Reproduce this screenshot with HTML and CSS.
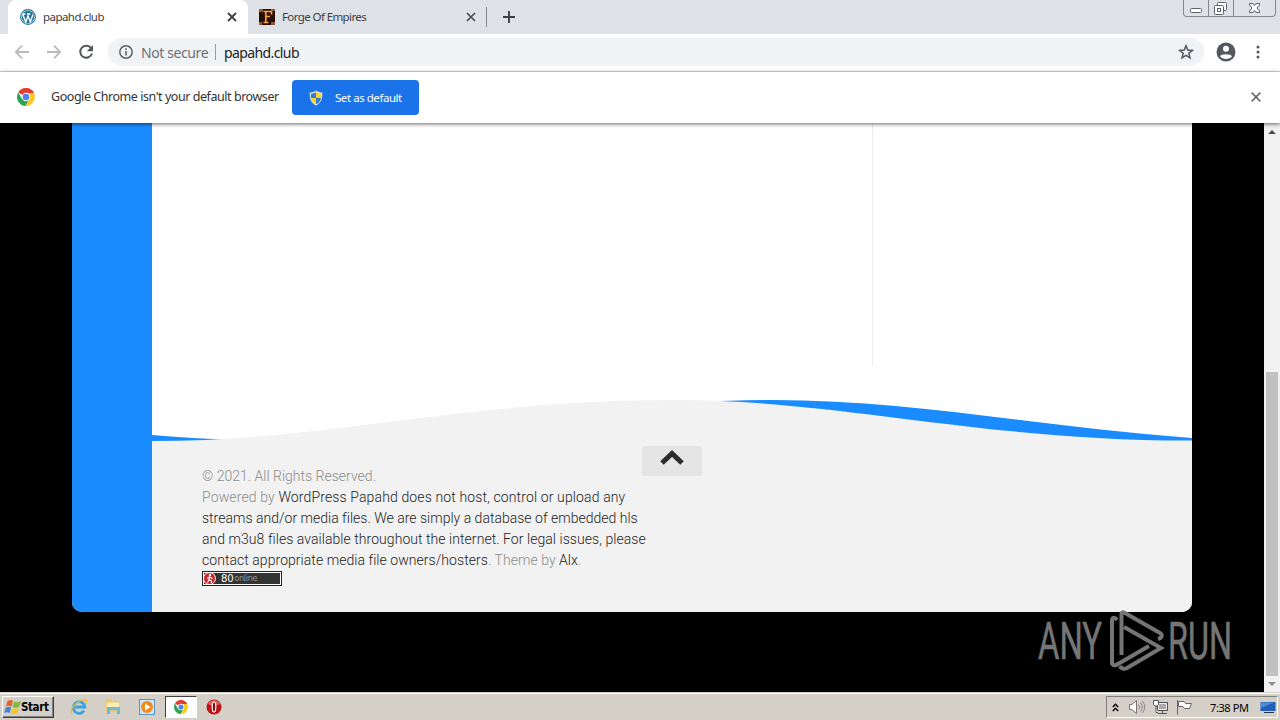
FILE: index.html
```html
<!DOCTYPE html>
<html lang="en">
<head>
<meta charset="UTF-8">
<title>papahd.club</title>
<link rel="stylesheet" href="styles.css">
</head>
<body>
<svg width="0" height="0" class="defs">
    <symbol id="chrome" viewBox="0 0 18 18">
        <path d="M9 9L1.2 4.5A9 9 0 0 1 16.8 4.5L16.8 5H9z" fill="#e33b2e"/>
        <path d="M9 9L5.2 11.2L1.2 4.5A9 9 0 0 0 8.6 18L12.5 11z" fill="#2da44e"/>
        <path d="M9 5H16.9A9 9 0 0 1 8.6 18L12.5 11z" fill="#fbc81e"/>
        <circle cx="9" cy="9" r="4.2" fill="#fff"/>
        <circle cx="9" cy="9" r="3.3" fill="#4a83ee"/>
    </symbol>
</svg>

<div class="tabs">
    <div class="tab active">
        <svg class="fav" viewBox="0 0 16 16">
            <circle cx="8" cy="8" r="7.4" fill="#fff" stroke="#21759b" stroke-width="1.1"/>
            <circle cx="8" cy="8" r="6.3" fill="#21759b"/>
            <path d="M2.6 5.2L5.8 13L8 6.8L10.3 13L13 5.5M2.2 5H5.4M7 5H10.4" fill="none" stroke="#fff" stroke-width="1.4"/>
        </svg>
        <span class="name name1">papahd.club</span>
        <svg class="x" viewBox="0 0 10 10"><path d="M1 1L9 9M9 1L1 9" stroke="#3c4043" stroke-width="1.8"/></svg>
    </div>
    <div class="tab second">
        <svg class="fav" viewBox="0 0 16 16">
            <rect width="16" height="16" fill="#2a0d05"/>
            <path d="M0 0H4V3H0zM12 13H16V16H12zM12 0H16V2H12zM0 13H3V16H0z" fill="#8a5a48"/>
            <path d="M4.500 2.500H12.500V5.500M6.800 2.500V13.500M4.500 13.500H9.500M7 7.500H11" fill="none" stroke="#f5a33b" stroke-width="1.700"/>
        </svg>
        <span class="name name2">Forge Of Empires</span>
        <svg class="x" viewBox="0 0 10 10"><path d="M1 1L9 9M9 1L1 9" stroke="#4a4d51" stroke-width="1.7"/></svg>
    </div>
    <div class="sep"></div>
    <svg class="plus" viewBox="0 0 12 12"><path d="M6 0V12M0 6H12" stroke="#3c4043" stroke-width="1.9"/></svg>
    <div class="winbtns">
        <span class="wb"><svg width="26" height="16" viewBox="0 0 26 16"><rect x="6.500" y="8.500" width="11" height="4" rx="1" fill="#fff" stroke="#5f6368"/></svg></span>
        <span class="wb"><svg width="24" height="16" viewBox="0 0 24 16"><rect x="8.500" y="2.500" width="9" height="8" rx="1" fill="#fff" stroke="#5f6368"/><rect x="5.500" y="5.500" width="9" height="9" rx="1" fill="#fff" stroke="#5f6368"/><rect x="8.500" y="8.500" width="3" height="3" fill="none" stroke="#5f6368"/></svg></span>
        <span class="wb last"><svg width="41" height="16" viewBox="0 0 41 16"><path d="M15.500 3.500H19L20.500 5.500L22 3.500H25.500V5L23 8L25.500 11V12.500H22L20.500 10.500L19 12.500H15.500V11L18 8L15.500 5z" fill="#fff" stroke="#5f6368"/></svg></span>
    </div>
</div>

<div class="toolbar">
    <svg class="nav" viewBox="0 0 16 16"><path d="M15 8H2M8 1.700L1.800 8L8 14.300" fill="none" stroke="#b9bbbe" stroke-width="1.8"/></svg>
    <svg class="nav" viewBox="0 0 16 16"><path d="M1 8H14M8 1.700L14.200 8L8 14.300" fill="none" stroke="#b9bbbe" stroke-width="1.8"/></svg>
    <svg class="nav" viewBox="0 0 16 16"><path d="M13.200 4.300A6 6 0 1 0 14 9.500" fill="none" stroke="#54585d" stroke-width="2"/><path d="M15 1V7.200H8.800z" fill="#54585d"/></svg>
    <div class="omnibox">
        <svg width="14" height="14" viewBox="0 0 14 14"><circle cx="7" cy="7" r="6.200" fill="none" stroke="#5f6368" stroke-width="1.500"/><path d="M7 6V10.500M7 3.300V4.900" stroke="#5f6368" stroke-width="1.600"/></svg>
        <span class="notsecure">Not secure</span>
        <span class="bar"></span>
        <span class="url">papahd.club</span>
        <svg class="star" viewBox="0 0 16 16"><path d="M8 1.800L9.700 6.100L14.300 6.400L10.800 9.300L12 13.900L8 11.400L4 13.900L5.200 9.300L1.700 6.400L6.300 6.100z" fill="none" stroke="#54585d" stroke-width="1.500"/></svg>
    </div>
    <svg class="user" viewBox="0 0 20 20"><circle cx="10" cy="10" r="9.500" fill="#54585d"/><circle cx="10" cy="6.800" r="3" fill="#fff"/><path d="M4 14.300C5 11.600 15 11.600 16 14.300C13.500 17.800 6.500 17.800 4 14.300z" fill="#fff"/></svg>
    <svg class="dots" viewBox="0 0 4 14"><circle cx="2" cy="2" r="1.500"/><circle cx="2" cy="7" r="1.500"/><circle cx="2" cy="12" r="1.500"/></svg>
</div>

<div class="infobar">
    <svg class="logo"><use href="#chrome"/></svg>
    <span class="msg">Google Chrome isn't your default browser</span>
    <div class="setdefault">
        <svg width="14" height="16" viewBox="0 0 14 16"><path d="M7 .5C5 2 3 2.500 .7 2.500C.5 9 2 13 7 15.500C12 13 13.500 9 13.300 2.500C11 2.500 9 2 7 .5z" fill="#e9e7dc"/><path d="M7 2V8H2C1.800 6.500 1.800 5 2 3.700C4 3.600 5.500 3 7 2zM7 8H12C11.500 11 10 13 7 14.300z" fill="#2e7fd4"/><path d="M7 2C8.500 3 10 3.600 12 3.700C12.200 5 12.200 6.500 12 8H7zM7 8V14.300C4 13 2.500 11 2 8z" fill="#fad02c"/></svg>
        <span>Set as default</span>
    </div>
    <svg class="close" viewBox="0 0 10 10"><path d="M.7 .7L9.300 9.300M9.300 .7L.7 9.300" stroke="#6a6d71" stroke-width="1.700"/></svg>
</div>

<div class="view">
    <div class="page">
        <div class="sidebar"></div>
        <div class="main">
            <div class="content"><div class="col"></div></div>
            <svg class="wave" viewBox="0 0 1040 41">
                <path d="M0 35C30 37.500 60 39.500 90 39.800C300 40 430 0 620 0C760 0 880 26 1040 38V41H0z" fill="#1a8cff"/>
                <path d="M0 41C180 41 310 0 522 0C690 0 830 41 1040 40.500V41z" fill="#f2f2f2"/>
            </svg>
            <div class="footer">
                <div class="copy">
                    <p>© 2021. All Rights Reserved.</p>
                    <p class="wide">Powered by <a>WordPress</a> <a>Papahd does not host, control or upload any</a></p>
                    <p><a>streams and/or media files. We are simply a database of embedded hls</a></p>
                    <p class="mid"><a>and m3u8 files available throughout the internet. For legal issues, please</a></p>
                    <p class="mid"><a>contact appropriate media file owners/hosters</a>. Theme by <a>Alx</a>.</p>
                    <div class="counter">
                        <svg width="13" height="13" viewBox="0 0 13 13"><circle cx="6.500" cy="6.500" r="6" fill="#c9252c" stroke="#fff"/><circle cx="7" cy="3" r="1.200" fill="#fff"/><path d="M7 4.500L6 7.500L8.500 9L8.500 11M6 7.500L4.500 10.500M4 6.500L6.500 4.800L9.500 6.800" fill="none" stroke="#fff" stroke-width="1.100"/></svg>
                        <b>80</b><span>online</span>
                    </div>
                </div>
                <div class="totop"><svg width="26" height="17" viewBox="0 0 26 17"><path d="M3 14L13 4.500L23 14" fill="none" stroke="#2d2d2d" stroke-width="5"/></svg></div>
            </div>
        </div>
    </div>
    <div class="scroll">
        <svg width="8" height="4" viewBox="0 0 8 4"><path d="M0 4L4 0L8 4z" fill="#4b4b4b"/></svg>
        <div class="thumb"></div>
        <svg width="8" height="4" viewBox="0 0 8 4"><path d="M0 0L4 4L8 0z" fill="#8c8c8c"/></svg>
    </div>
    <svg class="anyrun" viewBox="0 0 208 66">
        <text x="2" y="51" textLength="64" lengthAdjust="spacingAndGlyphs">ANY</text>
        <text x="132" y="51" textLength="64" lengthAdjust="spacingAndGlyphs">RUN</text>
        <g fill="none" stroke="#757575" stroke-width="4">
            <path d="M81 12C78 8 76 10 76 13V54C76 58 79 58 82 56L113 38"/>
            <path d="M85.500 47V6C85.500 4 87 4 89 5L124 25C127 27 126 30 122 31"/>
            <path d="M88 19L125 40L91 60C87 62 85 60 84 58"/>
        </g>
    </svg>
</div>

<div class="taskbar">
    <div class="start">
        <svg width="18" height="16" viewBox="0 0 18 16"><path d="M3.500 2C6 .5 7.500 1 9 2L7.500 7.500C6 6.500 4 6.500 2 7.500z" fill="#e8622c"/><path d="M10 2.500C12 3.800 14 3.500 17 2L15 8C13 9 11 9 8.700 7.800z" fill="#7fbb3d"/><path d="M1.800 8.500C4 7.500 5.500 7.500 7.200 8.500L5.700 14C4 13 2.500 13 0 14z" fill="#3f86d6"/><path d="M8.300 9C10.500 10.200 12 10 14.700 9L13 14.500C11 15.700 9 15.500 6.800 14.300z" fill="#f8c531"/></svg>
        <b>Start</b>
    </div>
    <div class="quick">
        <svg viewBox="0 0 18 18"><path d="M14 12.500A5.800 5.800 0 1 1 14.800 9H5" fill="none" stroke="#3ca4e4" stroke-width="2.800"/><path d="M2 15.500C-1 12 5 4.500 12 2C16 .6 17.500 2.500 16 5.500" fill="none" stroke="#e8bd3c" stroke-width="1.300"/></svg>
        <svg viewBox="0 0 18 18"><path d="M2 2L7 1L8 3H15V14H2z" fill="#e9c96a"/><path d="M3 4.500H15V9H3z" fill="#fbefb5"/><path d="M3 9H16V16H13V12H6V16H3z" fill="#6db9e2"/></svg>
        <svg viewBox="0 0 18 18"><rect x="1.500" y="1.500" width="15" height="15" fill="#cfe4f6" stroke="#5b94cc"/><circle cx="9" cy="9" r="6" fill="#f28a1c"/><path d="M7 5.500L12.500 9L7 12.500z" fill="#fff"/></svg>
        <div class="running"><svg viewBox="0 0 18 18"><use href="#chrome" x="2" y="2" width="14" height="14"/></svg></div>
        <svg viewBox="0 0 18 18"><circle cx="9" cy="9" r="7.500" fill="#bd1517"/><path d="M3 6C5 1 13 1 15 6C11 8 7 8 3 6z" fill="#e06464"/><ellipse cx="9" cy="9" rx="1.800" ry="5" fill="#7b0c0e" stroke="#fff" stroke-width="1.200"/></svg>
    </div>
    <div class="tray">
        <svg width="7" height="9" viewBox="0 0 7 9"><path d="M.8 4L3.500 1.200L6.200 4M.8 8L3.500 5.200L6.200 8" fill="none" stroke="#000" stroke-width="1.400"/></svg>
        <svg class="t1" width="18" height="16" viewBox="0 0 18 16"><path d="M1.500 5.500H4L8.500 1.500V14.500L4 10.500H1.500z" fill="#fff" stroke="#777"/><path d="M10.500 5.500Q12.500 8 10.500 10.500M12.500 3.500Q16 8 12.500 12.500M14.500 2Q19 8 14.500 14" fill="none" stroke="#888"/></svg>
        <svg class="t2" width="17" height="16" viewBox="0 0 17 16"><rect x="5.500" y="3.500" width="10" height="8" fill="#aaa" stroke="#555"/><path d="M6.500 4.500H14.500V10.500H6.500z" fill="none" stroke="#eee"/><path d="M6 14.500H15M10.500 12V14" stroke="#555"/><path d="M1.500 1.500H6.500V5.500L5 7H3L1.500 5.500zM4 7V13.500H6" fill="#fff" stroke="#555"/></svg>
        <svg class="t3" width="17" height="16" viewBox="0 0 17 16"><path d="M1.500 1V15.500M2.500 2.500H8L9.500 4.500H15.500L13.500 9.500H8.500L7 7.500H2.500z" fill="#fff" stroke="#666"/></svg>
        <span class="clock">7:38 PM</span>
        <svg class="t4" width="16" height="14" viewBox="0 0 16 14"><path d="M.5 2H15.500V11H.5z" fill="#235fb8"/><path d="M1 2.500H14L1 8z" fill="#4b8edb"/><path d="M4 12H14V13H4z" fill="#24364d"/></svg>
    </div>
</div>
</body>
</html>
```
FILE: styles.css
```css
* {box-sizing: border-box;}
body {margin: 0; width: 1280px; height: 720px; overflow: hidden; background: #000; font-family: "Noto Sans", "DejaVu Sans", sans-serif; font-size: 12px; color: #333;}
svg {display: block; flex: none;}
span, b {white-space: nowrap;}
.defs {position: absolute;}

/* tab strip */
.tabs {height: 34px; background: #dee1e6; display: flex; align-items: center; padding-left: 8px;}
.tab {height: 34px; display: flex; align-items: center; flex: none;}
.active {width: 240px; background: #fff; border-radius: 8px 8px 0 0; padding: 0 11px 0 12px;}
.second {width: 238px; padding: 0 10px 0 11px;}
.fav {width: 16px; height: 16px; margin-right: 7px;}
.name {flex: 1; font-size: 11.5px; color: #3c4043; padding-bottom: 1px;}
.name1 {letter-spacing: -0.55px;}
.name2 {letter-spacing: -0.6px;}
.x {width: 10px; height: 10px;}
.sep {width: 1px; height: 20px; background: #85888d;}
.plus {width: 12px; height: 12px; margin-left: 16px;}
.winbtns {display: flex; align-self: flex-start; height: 17px; margin: 0 4px 0 auto; border: 1px solid #85888f; border-top: 0; border-radius: 0 0 4px 4px;}
.wb {border-right: 1px solid #85888f; width: 25px; overflow: hidden;}
.last {border: 0; width: 41px;}

/* address bar */
.toolbar {height: 38px; background: #fff; border-bottom: 1px solid #d9dbde; display: flex; align-items: center; padding: 0 0 1px 14px;}
.nav {width: 16px; height: 16px; margin-right: 16px;}
.omnibox {width: 1096px; height: 28px; margin-left: -2px; background: #f0f3f6; border-radius: 14px; display: flex; align-items: center; padding: 0 10px 0 11px; font-size: 14px;}
.notsecure {margin-left: 8px; width: 74px; color: #6b6f74; letter-spacing: -0.4px;}
.bar {width: 1px; height: 16px; background: #9a9da1; margin-right: 8px;}
.url {color: #202124; letter-spacing: -0.6px;}
.star {width: 16px; height: 16px; margin-left: auto;}
.user {width: 20px; height: 20px; margin-left: 12px;}
.dots {width: 4px; height: 14px; margin-left: 20px; fill: #54585d;}

.infobar {height: 51px; background: #fff; display: flex; align-items: center; padding-left: 17px; position: relative; z-index: 2; box-shadow: 0 1px 4px rgba(0,0,0,0.6);}
.infobar > svg {margin-bottom: 1px;}
.logo {width: 18px; height: 18px;}
.msg {margin-left: 16px; width: 241px; font-size: 12.5px; letter-spacing: -0.45px; padding-bottom: 2px;}
.setdefault {width: 127px; height: 35px; background: #1a73e8; border-radius: 4px; color: #fff; display: flex; align-items: center; padding-left: 17px; font-size: 11.5px; letter-spacing: -0.45px;}
.setdefault span {margin-left: 12px;}
.close {width: 10px; height: 10px; margin: 0 19px 0 auto;}

/* site */
.view {height: 569px; background: #000; display: flex; position: relative; padding-left: 72px;}
.page {width: 1120px; height: 489px; display: flex; background: #fff; border-radius: 0 0 10px 10px; overflow: hidden;}
.sidebar {width: 80px; background: #1a8cff;}
.main {width: 1040px;}
.content {height: 277px;}
.col {width: 721px; height: 243px; border-right: 1px solid #eee;}
.wave {width: 1040px; height: 41px;}
.footer {height: 171px; background: #f2f2f2; display: flex; padding: 0 0 0 50px;}
.copy {width: 440px; padding-top: 25px; font: 300 14px/21px Roboto, sans-serif; color: #8c8c8c; white-space: nowrap; letter-spacing: 0.01px;}
.copy p {margin: 0;}
.copy a {color: #222;}
.copy .wide {letter-spacing: 0.13px;}
.copy .mid {letter-spacing: 0.05px;}
.totop {width: 60px; height: 30px; margin-top: 5px; background: #e5e5e5; border-radius: 3px; display: flex; justify-content: center; padding-top: 3px;}
.counter {width: 80px; height: 15px; background: #333; border: 1px solid #222; outline: 1px solid #fff; outline-offset: -2px; display: flex; align-items: center; font: 9px/13px "DejaVu Sans Condensed", "DejaVu Sans", sans-serif; color: #999; letter-spacing: -0.3px;}
.counter b {font: 10px/13px "DejaVu Sans", sans-serif; color: #fff; margin: 0 1px 0 5px; letter-spacing: -0.2px;}

.scroll {width: 16px; margin-left: 72px; background: #f1f1f1; display: flex; flex-direction: column; align-items: center; padding: 7px 0 6px;}
.thumb {width: 12px; height: 304px; background: #c1c1c1; margin: auto 0 6px;}
.anyrun {position: absolute; left: 1036px; top: 485px; width: 208px; height: 66px;}
.anyrun text {font: 52px Roboto, sans-serif; fill: #757575; stroke: #757575; stroke-width: 0.6px;}

/* windows taskbar */
.taskbar {height: 28px; background: #d4d0c8; border-top: 1px solid #d4d0c8; box-shadow: inset 0 1px #fff; display: flex; align-items: center; padding: 1px 2px 0; color: #000;}
.start {width: 52px; height: 22px; display: flex; align-items: center; border: 1px solid; border-color: #fff #404040 #404040 #fff; box-shadow: inset -1px -1px #808080; font: 11.5px "DejaVu Sans Condensed", "DejaVu Sans", sans-serif; padding-left: 1px;}
.start b {letter-spacing: -0.4px; margin-left: -1px;}
.quick {display: flex; align-items: center; margin-left: 16px;}
.quick > svg, .running svg {width: 18px; height: 18px;}
.quick > svg {margin-right: 16px;}
.running {width: 32px; height: 22px; background: #fff; border: 1px solid; border-color: #404040 #fff #fff #404040; display: flex; align-items: center; justify-content: center; margin: 0 8px 0 -7px;}
.tray {height: 22px; width: 172px; margin-left: auto; border: 1px solid; border-color: #808080 #fff #fff #808080; display: flex; align-items: center; padding-left: 5px;}
.t1 {margin-left: 9px;}
.t2 {margin-left: 6px;}
.t3 {margin-left: 7px;}
.clock {margin-left: 17px; width: 50px; font-size: 11px; letter-spacing: -0.4px;}
```
